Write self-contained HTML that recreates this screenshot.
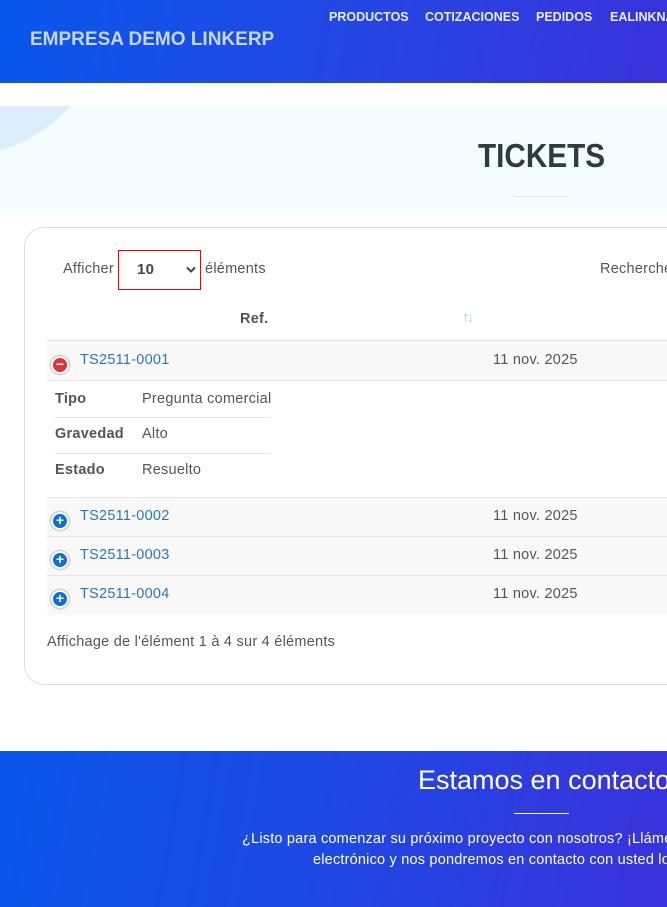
<!DOCTYPE html>
<html><head><meta charset="utf-8"><style>
*{box-sizing:border-box;margin:0;padding:0}
body{width:667px;height:907px;overflow:hidden;position:relative;background:#fff;font-family:"Liberation Sans",sans-serif;color:#555;font-size:14px}
.hdr{position:absolute;left:0;top:0;width:667px;height:83px;background:linear-gradient(100deg,#0757ec 0%,#2348e4 50%,#3a32dc 100%)}
.brand{position:absolute;left:30px;top:29px;color:#c9d6fb;font-weight:bold;font-size:19px}
.nav{position:absolute;top:10px;color:#e8ecff;font-weight:bold;font-size:12.5px}
.band{position:absolute;left:0;top:106px;width:667px;height:109px;background:#f3fcff;overflow:hidden}
.circ{position:absolute;left:-190px;top:-260px;width:300px;height:310px;border-radius:50%;background:#dcedfd}
.title{position:absolute;left:478px;top:137px;font-size:33px;font-weight:bold;color:#2d3b45;transform:scaleX(0.9);transform-origin:left top}
.uline{position:absolute;left:514px;top:196px;width:54px;height:1px;background:#e0e6ea}
.card{position:absolute;left:24px;top:227px;width:700px;height:458px;border:1px solid #ddd;border-radius:20px}
.t{position:absolute;font-size:14.5px;letter-spacing:0.25px;white-space:nowrap}
.sel{position:absolute;left:118px;top:250px;width:83px;height:40px;border:1px solid #e00;}
.row{position:absolute;left:47px;width:640px;height:39px;background:#f8f8f8;border-top:1px solid #e6e6e6}
.ic{position:absolute;left:51px;width:18px;height:18px;border-radius:50%;border:2px solid #fff;box-shadow:0 0 2px #666;color:#fff;font-weight:bold;font-size:14px;line-height:13px;text-align:center}
.lnk{color:#2a77c0}
.ftr{position:absolute;left:0;top:751px;width:667px;height:156px;background:linear-gradient(100deg,#0a56ea 0%,#1f48e4 50%,#3a32dc 100%);color:#fff}
</style></head><body>
<div class="hdr">
<div class="brand">EMPRESA DEMO LINKERP</div>
<div class="nav" style="left:329px">PRODUCTOS</div>
<div class="nav" style="left:425px">COTIZACIONES</div>
<div class="nav" style="left:536px">PEDIDOS</div>
<div class="nav" style="left:610px">EALINKNA</div>
</div>
<div class="band"><div class="circ"></div></div>
<div class="title">TICKETS</div>
<div class="uline"></div>
<div class="card"></div>
<div class="t" style="left:63px;top:261px">Afficher</div>
<div class="sel"></div>
<div class="t" style="left:137px;top:261px;font-weight:bold;color:#444;font-size:15px">10</div>
<svg style="position:absolute;left:186px;top:266px" width="10" height="7"><path d="M1 1.5L5 5.5L9 1.5" stroke="#444" stroke-width="2" fill="none"/></svg>
<div class="t" style="left:205px;top:261px">éléments</div>
<div class="t" style="left:600px;top:261px">Recherche</div>
<div class="t" style="left:240px;top:311px;font-weight:bold;color:#555">Ref.</div>
<div class="t" style="left:462px;top:309px;color:#9cc3ee;font-size:15px;letter-spacing:-3px">↑<span style="color:#ccc">↓</span></div>
<div style="position:absolute;left:47px;top:340px;width:640px;height:2px;background:#ddd"></div>
<div class="row" style="top:341px;border-top:none"></div>
<div class="row" style="top:497px"></div>
<div class="row" style="top:536px"></div>
<div class="row" style="top:575px"></div>
<div style="position:absolute;left:47px;top:380px;width:640px;height:1px;background:#e6e6e6"></div>
<div class="ic" style="top:356px;background:#d33">−</div>
<div class="ic" style="top:512px;background:#0d6fd8">+</div>
<div class="ic" style="top:551px;background:#0d6fd8">+</div>
<div class="ic" style="top:590px;background:#0d6fd8">+</div>
<div class="t lnk" style="left:80px;top:352px">TS2511-0001</div>
<div class="t lnk" style="left:80px;top:508px">TS2511-0002</div>
<div class="t lnk" style="left:80px;top:547px">TS2511-0003</div>
<div class="t lnk" style="left:80px;top:586px">TS2511-0004</div>
<div class="t" style="left:493px;top:352px">11 nov. 2025</div>
<div class="t" style="left:493px;top:508px">11 nov. 2025</div>
<div class="t" style="left:493px;top:547px">11 nov. 2025</div>
<div class="t" style="left:493px;top:586px">11 nov. 2025</div>
<div class="t" style="left:55px;top:391px;font-weight:bold">Tipo</div>
<div class="t" style="left:142px;top:391px">Pregunta comercial</div>
<div style="position:absolute;left:55px;top:417px;width:216px;height:1px;background:#e6e6e6"></div>
<div class="t" style="left:55px;top:426px;font-weight:bold">Gravedad</div>
<div class="t" style="left:142px;top:426px">Alto</div>
<div style="position:absolute;left:55px;top:453px;width:216px;height:1px;background:#e6e6e6"></div>
<div class="t" style="left:55px;top:462px;font-weight:bold">Estado</div>
<div class="t" style="left:142px;top:462px">Resuelto</div>
<div class="t" style="left:47px;top:634px">Affichage de l'élément 1 à 4 sur 4 éléments</div>
<div class="ftr">
<div style="position:absolute;left:418px;top:14px;font-size:27px;white-space:nowrap">Estamos en contacto</div>
<div style="position:absolute;left:514px;top:62px;width:55px;height:1px;background:#fff"></div>
<div style="position:absolute;left:242px;top:80px;font-size:14.5px;letter-spacing:0.2px;white-space:nowrap">¿Listo para comenzar su próximo proyecto con nosotros? ¡Llámenos</div>
<div style="position:absolute;left:313px;top:101px;font-size:14.5px;letter-spacing:0.2px;white-space:nowrap">electrónico y nos pondremos en contacto con usted lo</div>
</div>
</body></html>
